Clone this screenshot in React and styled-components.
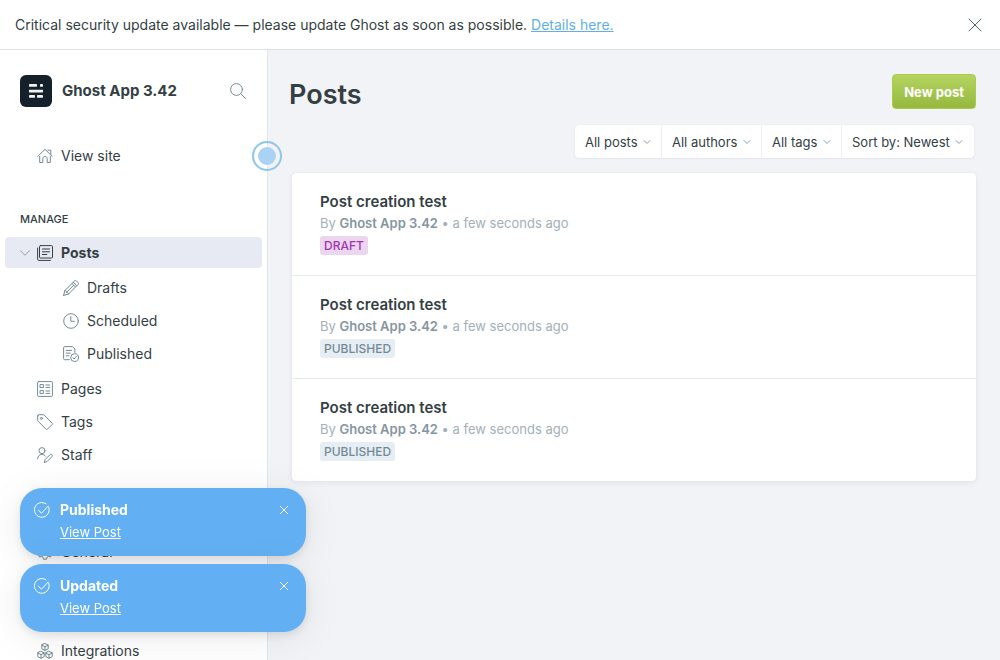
import React from "react";
import styled, { createGlobalStyle, css } from "styled-components";

const GlobalStyle = createGlobalStyle`
  *, *::before, *::after { box-sizing: border-box; }
  body {
    margin: 0;
    color: #343f44;
    background: #f2f3f7;
    font-family: Inter, "Open Sans", "Liberation Sans", sans-serif;
    font-size: 14px;
    line-height: 20px;
    -webkit-font-smoothing: antialiased;
  }
  button, select { font: inherit; color: inherit; }
`;

const App = styled.div`
  display: flex;
  flex-direction: column;
  height: 100vh;
  overflow: hidden;
`;

const Banner = styled.aside`
  display: flex;
  align-items: center;
  justify-content: space-between;
  flex: none;
  height: 50px;
  padding: 0 17px 0 15px;
  background: #fff;
  border-bottom: 1px solid #dbe0e3;

  p { margin: 0; }
  a { color: #5fb0ea; }
`;

const IconButton = styled.button`
  display: inline-flex;
  align-items: center;
  justify-content: center;
  padding: 0;
  border: 0;
  background: none;
  color: ${(p) => p.$color || "#738a94"};
  cursor: pointer;
`;

const Icon = styled.svg`
  display: block;
  flex: none;
  width: ${(p) => p.$size || 16}px;
  height: ${(p) => p.$size || 16}px;
  fill: none;
  stroke: currentColor;
  stroke-width: ${(p) => p.$weight || 1};
  stroke-linecap: round;
  stroke-linejoin: round;
`;

const Viewport = styled.div`
  display: flex;
  flex: 1;
  min-height: 0;
`;

const Sidebar = styled.nav`
  position: relative;
  flex: none;
  width: 268px;
  padding: 25px 5px 0;
  background: #fff;
  border-right: 1px solid #e3e7ee;
`;

const SiteHeader = styled.header`
  display: flex;
  align-items: center;
  gap: 10px;
  padding: 0 16px 0 15px;
  margin-bottom: 33px;
`;

const SiteLogo = styled.svg`
  display: block;
  width: 32px;
  height: 32px;
`;

const SiteName = styled.div`
  flex: 1;
  font-size: 15px;
  font-weight: 700;
`;

const NavList = styled.ul`
  display: flex;
  flex-direction: column;
  gap: 2px;
  margin: 0;
  padding: 0;
  list-style: none;
`;

const SubList = styled(NavList)`
  padding: 4px 0 2px;
`;

const NavItem = styled.li`
  position: relative;
`;

const NavLink = styled.a`
  display: flex;
  align-items: center;
  gap: 8px;
  height: 31px;
  padding-left: ${(p) => (p.$sub ? 58 : 32)}px;
  border-radius: 4px;
  color: #343f44;
  text-decoration: none;

  svg { color: #738a94; }

  ${(p) => p.$active && css`
    background: #e7eaf2;
    font-weight: 700;
    svg { color: #343f44; }
  `}
`;

const Expander = styled(IconButton)`
  position: absolute;
  top: 10px;
  left: 14px;
`;

const NavHeading = styled.h2`
  margin: 38px 0 8px;
  padding-left: 15px;
  font-size: 11px;
  font-weight: 500;
  line-height: 20px;
  text-transform: uppercase;
`;

const Beacon = styled.span`
  position: absolute;
  top: 91px;
  right: -15px;
  z-index: 1;
  display: flex;
  align-items: center;
  justify-content: center;
  width: 30px;
  height: 30px;
  border: 2px solid #8dc5f1;
  border-radius: 50%;

  &::before {
    content: "";
    width: 18px;
    height: 18px;
    border-radius: 50%;
    background: #a9d2f5;
  }
`;

const Main = styled.main`
  flex: 1;
  min-width: 0;
  padding: 24px 24px 0;
  background: #f2f3f7;
`;

const PageHeader = styled.header`
  display: flex;
  align-items: flex-start;
  justify-content: space-between;
  margin-bottom: 14px;
`;

const PageTitle = styled.h1`
  margin: 5px 0 0 -3px;
  font-size: 27px;
  font-weight: 600;
  line-height: 32px;
`;

const PrimaryButton = styled.button`
  height: 35px;
  padding: 0 11px;
  border: 1px solid #a9cc4b;
  border-radius: 4px;
  background: linear-gradient(#b3d45f, #97b83f);
  color: #fff;
  font-size: 13px;
  font-weight: 700;
  line-height: 32px;
  cursor: pointer;
`;

const Filters = styled.div`
  display: flex;
  width: max-content;
  margin: 0 2px 15px auto;
  border-radius: 4px;
  background: #fff;
  box-shadow: 0 0 1px rgba(60, 80, 110, 0.2), 0 1px 2px rgba(60, 80, 110, 0.06);
`;

const FilterField = styled.label`
  display: flex;
  align-items: center;
  height: 33px;
  gap: 5px;
  padding: 0 10px;
  font-size: 13px;

  & + & { border-left: 1px solid #eceef2; }
  &:last-child { padding-right: 11px; }
  svg { color: #8e9ca5; }
`;

const FilterSelect = styled.select`
  appearance: none;
  padding: 0;
  border: 0;
  background: none;
  cursor: pointer;
`;

const PostList = styled.ol`
  margin: 0;
  padding: 0;
  list-style: none;
  border-radius: 4px;
  background: #fff;
  box-shadow: 0 0 1px rgba(60, 80, 110, 0.15), 0 2px 6px rgba(60, 80, 110, 0.08);
`;

const PostRow = styled.li`
  padding: 18px 28px 20px;

  & + & { border-top: 1px solid #e5ebf0; }
`;

const PostTitle = styled.h3`
  margin: 0;
  font-size: 15px;
  font-weight: 600;
  line-height: 22px;
`;

const PostMeta = styled.p`
  margin: 0 0 3px;
  color: #a3b0ba;
  font-size: 13px;

  strong { color: #8595a1; font-weight: 600; }
`;

const Status = styled.span`
  display: block;
  width: max-content;
  padding: 0 4px;
  border-radius: 3px;
  background: ${(p) => (p.$draft ? "#ecd5ef" : "#e6eef4")};
  color: ${(p) => (p.$draft ? "#a337af" : "#738a94")};
  font-size: 12px;
  font-weight: 500;
  line-height: 19px;
  text-transform: uppercase;
`;

const Toasts = styled.aside`
  position: fixed;
  left: 20px;
  bottom: 28px;
  z-index: 2;
  display: flex;
  flex-direction: column;
  gap: 8px;
  width: 286px;
`;

const Toast = styled.article`
  display: flex;
  align-items: flex-start;
  gap: 10px;
  padding: 11px 17px 13px 14px;
  border-radius: 22px;
  background: #62b0f3;
  box-shadow: 0 6px 40px rgba(0, 0, 0, 0.08), 0 3px 10px rgba(0, 0, 0, 0.1);
  color: #fff;

  > svg { margin-top: 3px; }
  > button { margin: 6px 0 0; }
`;

const ToastBody = styled.div`
  flex: 1;
  font-size: 13px;
  line-height: 22px;

  strong { display: block; font-size: 14px; font-weight: 700; }
  a { color: inherit; }
`;

const glyphs = {
  home: <><path d="M.8 8.3 8 1.3l7.2 7" /><path d="M11 2.2h2.8V6.8M2.7 8.4v6.1h3.1v-3.8c0-1.3 1-2.2 2.2-2.2s2.2.9 2.2 2.2v3.8h3.1V8.4" /></>,
  posts: <><rect x="2.5" y=".6" width="13" height="12.4" rx="1" /><path d="M.6 3v11.4c0 .6.4 1 1 1h11.8M5.4 4h7.2M5.4 6.8h7.2M5.4 9.5h4.4" /></>,
  pencil: <><path d="m.6 15.4 1.3-4.9L11.6.9c.5-.5 1.3-.5 1.8 0l1.7 1.7c.5.5.5 1.3 0 1.8l-9.6 9.7-4.9 1.3ZM10.3 2.2l3.5 3.5M9 3.5 12.5 7M1.9 10.5c1 .1 1.4.5 1.6 1.9 1.3 0 1.9.6 2 1.7M10.7 5.3l-7.2 7.1" /></>,
  clock: <><circle cx="8" cy="8" r="7.3" /><path d="M7.8 3.5v4.8h3.6" /></>,
  published: <><path d="M6.3 13.7H1.6c-.6 0-1-.4-1-1V1.6c0-.6.4-1 1-1h7.9l2.4 2.3v3.5M3.2 4.4h5.6M3.2 7.1h4M3.2 9.8h2.6" /><circle cx="11.6" cy="11.6" r="3.9" /><path d="m9.9 11.8 1.2 1.2 2.3-2.7" /></>,
  pages: <><rect x=".6" y=".6" width="14.8" height="14.8" rx="1" /><path d="M3.4 3.6h3v3h-3zM3.4 9.6h3v3h-3zM8.9 4h3.8M8.9 6.4h3.8M8.9 10h3.8M8.9 12.4h3.8" /></>,
  tag: <><path d="M.7 1.8v4.4c0 .4.1.7.4 1l7.8 7.9c.5.5 1.2.5 1.6 0l4.5-4.5c.5-.5.5-1.2 0-1.6L7.2 1.1C6.9.9 6.6.7 6.2.7H1.8C1.2.7.7 1.2.7 1.8Z" /><circle cx="4.4" cy="4.4" r="1" /></>,
  staff: <><circle cx="5" cy="3.6" r="3" /><path d="M.6 11.8C.6 9 2.5 7.5 5 7.5c1.5 0 2.8.6 3.6 1.7M7.4 15.4l.7-2.8 4.9-4.9c.5-.5 1.3-.5 1.9 0s.6 1.4.1 1.9l-4.9 4.9-2.7.9Z" /></>,
  gear: <><path d="m6.5.8-.5 2-1.4.8-2-.6L1.1 5.6l1.5 1.5v1.7L1.1 10.4l1.5 2.6 2-.6 1.4.8.5 2h3l.5-2 1.4-.8 2 .6 1.5-2.6-1.5-1.6V7.1l1.5-1.5L13.4 3l-2 .6-1.4-.8-.5-2Z" /><circle cx="8" cy="8" r="2.4" /></>,
  design: <><rect x=".6" y="1.6" width="14.8" height="12.8" rx="1" /><path d="M.6 5h14.8M5.5 5v9.4" /></>,
  code: <path d="M4.5 4 .8 8l3.7 4M11.5 4l3.7 4-3.7 4M9.5 2l-3 12" />,
  integrations: <><path d="m8 .6 3.2 1.5v3.7L8 7.4 4.8 5.8V2.1ZM4.8 2.2 8 3.8l3.2-1.6M8 3.8v3.5" /><path d="m4 8.4 3.2 1.5v3.7L4 15.3.8 13.6V9.9ZM.8 10 4 11.6 7.2 10M4 11.6v3.5" /><path d="m12 8.4 3.2 1.5v3.7L12 15.3l-3.2-1.7V9.9ZM8.8 10l3.2 1.6 3.2-1.6M12 11.6v3.5" /></>,
  search: <><circle cx="6.5" cy="6.5" r="5.9" /><path d="m10.8 10.8 4.6 4.6" /></>,
  close: <path d="m2 2 12 12M14 2 2 14" />,
  chevron: <path d="m2 5 6 6 6-6" />,
  check: <><path d="M14.7 5.1A7.4 7.4 0 1 1 12.1 1.8" /><path d="m4.5 8.3 3 2.9L14.2 4" /></>,
};

const Glyph = ({ name, size, weight }) => (
  <Icon viewBox="0 0 16 16" $size={size} $weight={weight} aria-hidden="true">{glyphs[name]}</Icon>
);

const contentLinks = [
  { label: "Pages", icon: "pages" },
  { label: "Tags", icon: "tag" },
  { label: "Staff", icon: "staff" },
];
const postLinks = [
  { label: "Drafts", icon: "pencil" },
  { label: "Scheduled", icon: "clock" },
  { label: "Published", icon: "published" },
];
const settingLinks = [
  { label: "General", icon: "gear" },
  { label: "Design", icon: "design" },
  { label: "Code injection", icon: "code" },
  { label: "Integrations", icon: "integrations" },
];
const filters = [
  { name: "Type", value: "All posts" },
  { name: "Author", value: "All authors" },
  { name: "Tag", value: "All tags" },
  { name: "Order", value: "Sort by: Newest" },
];
const posts = [
  { id: 1, status: "Draft" },
  { id: 2, status: "Published" },
  { id: 3, status: "Published" },
];

const renderLinks = (links, sub) =>
  links.map(({ label, icon }) => (
    <NavItem key={label}>
      <NavLink href="#" $sub={sub}><Glyph name={icon} />{label}</NavLink>
    </NavItem>
  ));

export default function GhostAdmin() {
  return (
    <App>
      <GlobalStyle />
      <Banner>
        <p>
          Critical security update available — please update Ghost as soon as possible.{" "}
          <a href="#">Details here.</a>
        </p>
        <IconButton aria-label="Dismiss update notice" $color="#54666d">
          <Glyph name="close" />
        </IconButton>
      </Banner>
      <Viewport>
        <Sidebar>
          <SiteHeader>
            <SiteLogo viewBox="0 0 32 32" aria-hidden="true">
              <rect width="32" height="32" rx="6" fill="#15212a" />
              <g fill="#f3f1f3">
                <rect x="9" y="9" width="8" height="2.7" rx=".4" />
                <rect x="20" y="9" width="3" height="2.7" rx=".4" />
                <rect x="9" y="14.7" width="14" height="2.7" rx=".4" />
                <rect x="9" y="20" width="6" height="2.7" rx=".4" />
                <rect x="17" y="20" width="6" height="2.7" rx=".4" />
              </g>
            </SiteLogo>
            <SiteName>Ghost App 3.42</SiteName>
            <IconButton aria-label="Search"><Glyph name="search" /></IconButton>
          </SiteHeader>
          <NavList>{renderLinks([{ label: "View site", icon: "home" }])}</NavList>
          <NavHeading>Manage</NavHeading>
          <NavList>
            <NavItem>
              <NavLink href="#" $active><Glyph name="posts" />Posts</NavLink>
              <Expander aria-label="Collapse posts"><Glyph name="chevron" size={12} /></Expander>
              <SubList>{renderLinks(postLinks, true)}</SubList>
            </NavItem>
            {renderLinks(contentLinks)}
          </NavList>
          <NavHeading>Settings</NavHeading>
          <NavList>{renderLinks(settingLinks)}</NavList>
          <Beacon />
        </Sidebar>
        <Main>
          <PageHeader>
            <PageTitle>Posts</PageTitle>
            <PrimaryButton>New post</PrimaryButton>
          </PageHeader>
          <Filters>
            {filters.map(({ name, value }) => (
              <FilterField key={name}>
                <FilterSelect aria-label={name}><option>{value}</option></FilterSelect>
                <Glyph name="chevron" size={8} weight={2} />
              </FilterField>
            ))}
          </Filters>
          <PostList>
            {posts.map(({ id, status }) => (
              <PostRow key={id}>
                <PostTitle>Post creation test</PostTitle>
                <PostMeta>By <strong>Ghost App 3.42</strong> • a few seconds ago</PostMeta>
                <Status $draft={status === "Draft"}>{status}</Status>
              </PostRow>
            ))}
          </PostList>
        </Main>
      </Viewport>
      <Toasts aria-label="Notifications">
        {["Published", "Updated"].map((title) => (
          <Toast key={title}>
            <Glyph name="check" />
            <ToastBody>
              <strong>{title}</strong>
              <a href="#">View Post</a>
            </ToastBody>
            <IconButton aria-label={`Dismiss ${title}`} $color="#fff">
              <Glyph name="close" size={10} weight={1.6} />
            </IconButton>
          </Toast>
        ))}
      </Toasts>
    </App>
  );
}
